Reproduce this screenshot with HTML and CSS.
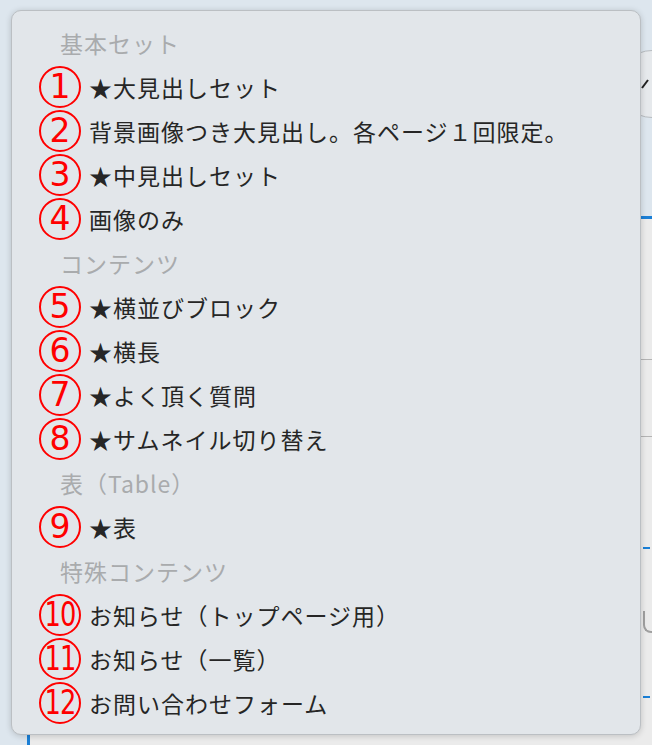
FILE: index.html
```html
<!DOCTYPE html>
<html lang="ja">
<head>
    <meta charset="UTF-8">
    <meta name="viewport" content="width=device-width, initial-scale=1.0">
    <title>ブロック選択</title>
    <link rel="stylesheet" href="styles.css">
</head>
<body>
    <!-- 背景の編集画面 -->
    <div class="topbar">
        <button class="edit-btn" type="button">
            <svg width="26" height="26" viewBox="0 0 26 26">
                <path d="M3 17 L9 9" fill="none" stroke="#222" stroke-width="2"/>
            </svg>
        </button>
    </div>
    <div class="panel">
        <div class="panel-row first"></div>
        <div class="panel-row second"></div>
        <div class="panel-row third">
            <span class="dash dash-a"></span>
            <span class="bracket"></span>
            <span class="dash dash-b"></span>
        </div>
    </div>

    <!-- ブロック選択メニュー -->
    <div class="menu">
        <div class="group">基本セット</div>
        <div class="item"><span class="num">1</span>★大見出しセット</div>
        <div class="item"><span class="num">2</span>背景画像つき大見出し。各ページ１回限定。</div>
        <div class="item"><span class="num">3</span>★中見出しセット</div>
        <div class="item"><span class="num">4</span>画像のみ</div>

        <div class="group">コンテンツ</div>
        <div class="item"><span class="num">5</span>★横並びブロック</div>
        <div class="item"><span class="num">6</span>★横長</div>
        <div class="item"><span class="num">7</span>★よく頂く質問</div>
        <div class="item"><span class="num">8</span>★サムネイル切り替え</div>

        <div class="group">表（Table）</div>
        <div class="item"><span class="num">9</span>★表</div>

        <div class="group">特殊コンテンツ</div>
        <div class="item"><span class="num two"><span>10</span></span>お知らせ（トップページ用）</div>
        <div class="item"><span class="num two"><span>11</span></span>お知らせ（一覧）</div>
        <div class="item"><span class="num two"><span>12</span></span>お問い合わせフォーム</div>
    </div>
</body>
</html>
```

FILE: styles.css
```css
html, body { margin: 0; height: 745px; overflow: hidden; }
body { background-color: #dde6ee; font-family: "Noto Sans CJK JP", sans-serif; position: relative; }

.topbar { height: 216px; display: flex; justify-content: flex-end; align-items: flex-start; overflow: hidden; }
.edit-btn { flex: none; width: 68px; height: 68px; margin-top: 50px; margin-right: -34px; border-radius: 50%; border: 1px solid #b8bcc0; background-color: #e6e9ec; display: flex; align-items: center; justify-content: center; padding: 0; }

.panel { margin-left: 27px; height: 526px; border-top: 3px solid #1a7fd6; border-left: 3px solid #1a7fd6; background-color: #ebebeb; }
.panel-row { border-bottom: 1px solid #b4b4b4; }
.panel-row.first { height: 140px; }
.panel-row.second { height: 76px; }
.panel-row.third { border-bottom: none; display: flex; flex-direction: column; padding-left: 613px; }
.dash { display: block; width: 7px; height: 2px; background-color: #1a7fd6; }
.dash-a { margin-top: 110px; }
.bracket { display: block; width: 7px; height: 20px; margin-top: 62px; border-left: 2px solid #a0a0a0; border-bottom: 2px solid #a0a0a0; border-radius: 0 0 0 8px; }
.dash-b { margin-top: 63px; }

.menu { position: absolute; left: 11px; top: 10px; width: 628px; height: 703px; padding: 10px 0 10px 0; background-color: #e2e6ea; border: 1px solid #bbbfc3; border-radius: 10px; box-shadow: 0 1px 6px rgba(0, 0, 0, 0.18); }

.group { height: 44px; line-height: 44px; padding-left: 48px; font-size: 23px; letter-spacing: 1px; color: #a9abad; }
.item { height: 44px; display: flex; align-items: center; gap: 8px; padding-left: 27px; font-size: 23px; letter-spacing: 1px; color: #262626; white-space: nowrap; }

.num { flex: none; width: 38px; height: 38px; border: 2px solid #ff0000; border-radius: 50%; color: #ff0000; font-family: "DejaVu Sans", sans-serif; font-size: 33px; letter-spacing: 0; line-height: 38px; text-align: center; display: flex; align-items: center; justify-content: center; }
.num.two span { display: inline-block; transform: scaleX(0.78); letter-spacing: -1px; }
```
